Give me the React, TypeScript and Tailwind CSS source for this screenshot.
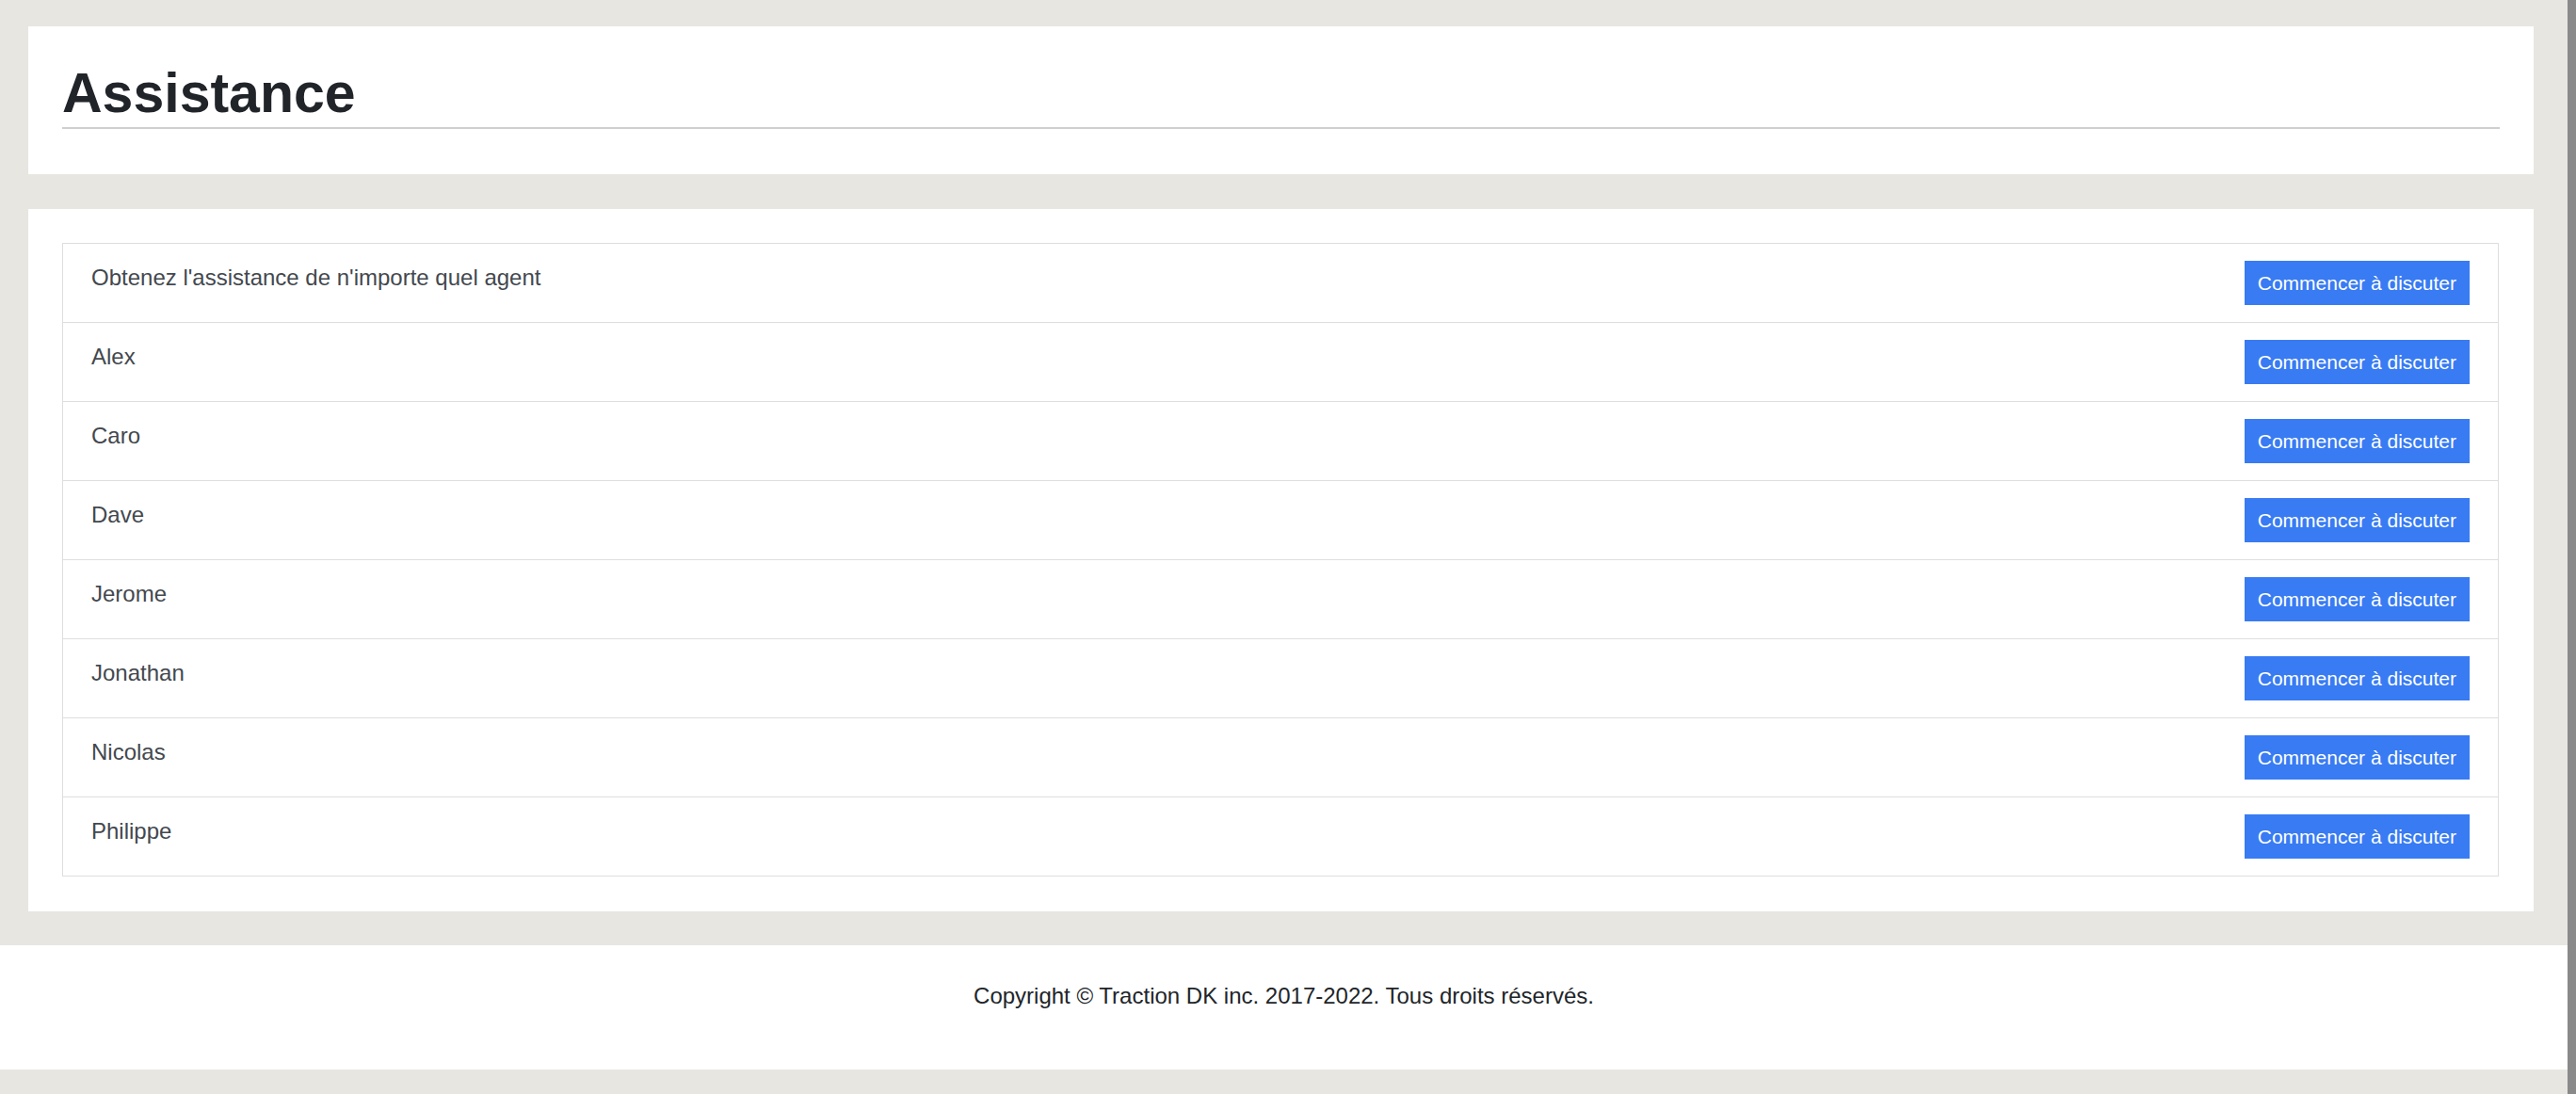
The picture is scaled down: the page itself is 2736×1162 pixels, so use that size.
import React from 'react';

const agents: string[] = [
  "Obtenez l'assistance de n'importe quel agent",
  'Alex',
  'Caro',
  'Dave',
  'Jerome',
  'Jonathan',
  'Nicolas',
  'Philippe',
];

const App: React.FC = () => {
  return (
    <div className="flex min-h-screen bg-[#e8e6e1] font-['Liberation_Sans',Arial,sans-serif]">
      <div className="flex-1 min-w-0">
        <div className="pt-[28px] pl-[30px] pr-[36px] space-y-[37px]">
          <section className="bg-white px-[36px] pt-[36px] pb-[48px]">
            <h1 className="border-b-2 border-[#cfcfcf] text-[59px] font-bold leading-[71px] text-[#212529]">
              Assistance
            </h1>
          </section>

          <section className="bg-white p-[36px] pr-[37px] pb-[37px]">
            <div className="border border-[#dedede]">
              {agents.map((agent, i) => (
                <div
                  key={agent}
                  className={`flex items-start justify-between px-[30px] py-[18px] ${
                    i < agents.length - 1 ? 'border-b border-[#dedede]' : ''
                  }`}
                >
                  <span className="text-[24px] leading-[36px] text-[#43484e]">{agent}</span>
                  <button className="flex h-[47px] items-center bg-[#387bf3] px-[14px] text-[21px] text-white">
                    Commencer à discuter
                  </button>
                </div>
              ))}
            </div>
          </section>
        </div>

        <footer className="mt-[36px] bg-white pt-[36px] pb-[60px] text-center">
          <p className="text-[24px] leading-[36px] text-[#212529]">
            Copyright © Traction DK inc. 2017-2022. Tous droits réservés.
          </p>
        </footer>
      </div>
      <div className="w-[9px] shrink-0 bg-[#8a8a8a]" />
    </div>
  );
};

export default App;
